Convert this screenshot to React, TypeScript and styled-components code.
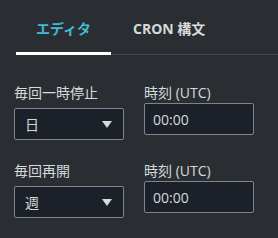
import { Fragment } from "react"
import styled, { createGlobalStyle } from "styled-components"

const GlobalStyle = createGlobalStyle`
html, body {
    margin: 0;
    padding: 0;
    background: #2a2e33;
}
body {
    font-family: "Open Sans", "Noto Sans CJK JP", sans-serif;
    color: #d5dbdb;
}
`

const Page = styled.div`
width: 278px;
height: 238px;
overflow: hidden;
background: #2a2e33;
`

const TabList = styled.div`
display: flex;
flex-direction: row;
margin-left: 16px;
height: 55px;
box-shadow: inset 0 -1px 0 #414750;
`

const Tab = styled.div<{ $active?: boolean }>`
position: relative;
display: flex;
align-items: center;
padding: 0 20px 0 ${(p) => (p.$active ? "20px" : "22px")};
font-size: 14px;
font-weight: 700;
color: ${(p) => (p.$active ? "#44b9d6" : "#d5dbdb")};
box-shadow: ${(p) => (p.$active ? "inset 0 -3px 0 #ffffff" : "none")};
& + &::before {
    content: "";
    position: absolute;
    left: 0;
    top: 12px;
    width: 1px;
    height: 30px;
    background: #414750;
}
`

const Form = styled.div`
display: grid;
grid-template-columns: 110px 110px;
column-gap: 20px;
row-gap: 21px;
padding: 28px 0 0 14px;
`

const Field = styled.div`
display: flex;
flex-direction: column;
`

const Label = styled.label`
font-size: 14px;
line-height: 20px;
color: #d5dbdb;
`

const SelectBox = styled.div`
box-sizing: border-box;
margin-top: 5px;
height: 32px;
display: flex;
align-items: center;
justify-content: space-between;
padding: 0 11px 0 10px;
background: #1b2029;
border: 1px solid #7d8590;
border-radius: 2px;
font-size: 14px;
color: #d5dbdb;
`

const Caret = styled.svg`
width: 10px;
height: 7px;
fill: #d5dbdb;
`

const TimeInput = styled.input`
box-sizing: border-box;
width: 110px;
height: 32px;
margin: 0;
padding: 0 8px;
background: #1b2029;
border: 1px solid #7d8590;
border-radius: 2px;
font-family: "Open Sans", "Noto Sans CJK JP", sans-serif;
font-size: 14px;
color: #d5dbdb;
outline: none;
`

const rows = [
    { label: "毎回一時停止", value: "日" },
    { label: "毎回再開", value: "週" },
]

const App = () => {
    return (
        <>
            <GlobalStyle />
            <Page>
                <TabList>
                    <Tab $active>エディタ</Tab>
                    <Tab>CRON 構文</Tab>
                </TabList>
                <Form>
                    {rows.map((r) => (
                        <Fragment key={r.label}>
                            <Field>
                                <Label>{r.label}</Label>
                                <SelectBox>
                                    <span>{r.value}</span>
                                    <Caret viewBox="0 0 10 7">
                                        <polygon points="0,0 10,0 5,7" />
                                    </Caret>
                                </SelectBox>
                            </Field>
                            <Field>
                                <Label>時刻 (UTC)</Label>
                                <TimeInput value="00:00" readOnly />
                            </Field>
                        </Fragment>
                    ))}
                </Form>
            </Page>
        </>
    )
}

export default App
